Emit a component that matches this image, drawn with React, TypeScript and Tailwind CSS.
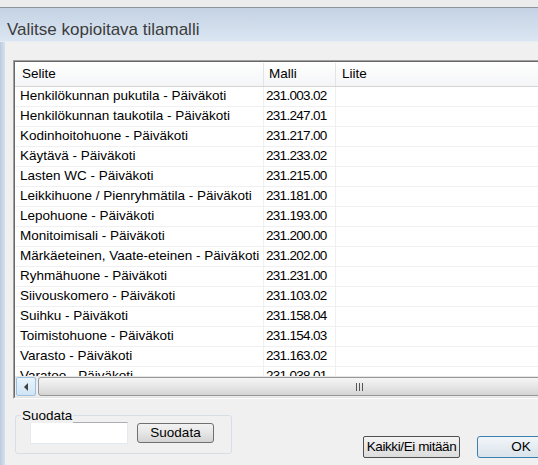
import React from "react";

const rows: [string, string][] = [
  ["Henkilökunnan pukutila - Päiväkoti", "231.003.02"],
  ["Henkilökunnan taukotila - Päiväkoti", "231.247.01"],
  ["Kodinhoitohuone - Päiväkoti", "231.217.00"],
  ["Käytävä - Päiväkoti", "231.233.02"],
  ["Lasten WC - Päiväkoti", "231.215.00"],
  ["Leikkihuone / Pienryhmätila - Päiväkoti", "231.181.00"],
  ["Lepohuone - Päiväkoti", "231.193.00"],
  ["Monitoimisali - Päiväkoti", "231.200.00"],
  ["Märkäeteinen, Vaate-eteinen - Päiväkoti", "231.202.00"],
  ["Ryhmähuone - Päiväkoti", "231.231.00"],
  ["Siivouskomero - Päiväkoti", "231.103.02"],
  ["Suihku - Päiväkoti", "231.158.04"],
  ["Toimistohuone - Päiväkoti", "231.154.03"],
  ["Varasto - Päiväkoti", "231.163.02"],
  ["Varatoo - Päiväkoti", "231.038.01"],
];

export default function App() {
  return (
    <div className="w-[538px] h-[465px] overflow-hidden bg-[#f0f0f0] flex flex-col font-['Liberation_Sans',Arial,sans-serif] text-[13.5px] text-black">
      <div className="h-[8px] shrink-0 bg-[#ececec] border-b border-[#8e949b]" />
      <div className="h-[34px] shrink-0 bg-gradient-to-b from-[#c4d2e4] to-[#dbe6f2] pl-[7px] pt-[12px] text-[17px] leading-[20px] text-[#3c3c3c] border-b border-[#e6edf5]">
        Valitse kopioitava tilamalli
      </div>
      <div className="flex flex-1 min-h-0">
        <div className="w-[5px] shrink-0 bg-gradient-to-r from-[#bccbdf] to-[#d6e1ee]" />
        <div className="flex-1 min-w-0 flex flex-col pl-[8px] pt-[18px]">
          {/* List view */}
          <div className="w-[580px] h-[339px] shrink-0 border border-t-[#a0a0a0] border-l-[#a0a0a0] border-b-white border-r-white">
            <div className="w-full h-full border border-t-[#696969] border-l-[#696969] border-b-[#e3e3e3] border-r-[#e3e3e3] bg-white flex flex-col">
              <div className="h-[25px] shrink-0 flex bg-gradient-to-b from-white to-[#f4f5f7] border-b border-[#d5d5d5] pt-[1px]">
                <div className="w-[249px] shrink-0 pl-[7px] flex items-center border-r border-[#e3e4e6]">Selite</div>
                <div className="w-[72px] shrink-0 pl-[5px] flex items-center border-r border-[#e3e4e6]">Malli</div>
                <div className="flex-1 pl-[6px] flex items-center">Liite</div>
              </div>
              <div className="flex-1 min-h-0 overflow-hidden">
                {rows.map(([name, code]) => (
                  <div key={code} className="h-[20px] flex border-b border-[#f0f0f0]">
                    <div className="w-[249px] shrink-0 pl-[5px] flex items-center border-r border-[#f0f0f0] whitespace-nowrap">{name}</div>
                    <div className="w-[72px] shrink-0 pl-[2px] flex items-center border-r border-[#f0f0f0] tracking-[-0.7px]">{code}</div>
                    <div className="flex-1" />
                  </div>
                ))}
              </div>
              {/* Horizontal scrollbar */}
              <div className="h-[21px] shrink-0 bg-gradient-to-b from-[#e6e6e6] via-[#f2f2f2] to-[#ececec] flex items-center pl-[1px]">
                <div className="w-[20px] h-[19px] shrink-0 rounded-[2px] border border-[#9ec0dc] bg-gradient-to-b from-[#eaf4fc] to-[#cfe4f5] flex items-center justify-center">
                  <svg width="5" height="8" viewBox="0 0 5 8"><path d="M4 0 L0 4 L4 8 Z" fill="#404040" /></svg>
                </div>
                <div className="ml-[2px] w-[642px] h-[19px] shrink-0 rounded-[3px] border border-[#979797] bg-gradient-to-b from-[#f5f5f5] via-[#e6e6e6] to-[#d4d4d4] flex items-center justify-center">
                  <div className="flex gap-[2px]">
                    <div className="w-[1px] h-[8px] bg-[#555]" />
                    <div className="w-[1px] h-[8px] bg-[#555]" />
                    <div className="w-[1px] h-[8px] bg-[#555]" />
                  </div>
                </div>
              </div>
            </div>
          </div>
          {/* Bottom area */}
          <div className="flex items-start">
            <div className="relative ml-[2px] mt-[16px] w-[217px] h-[39px] shrink-0 border border-[#d5dfe5] rounded-[3px] pl-[14px] pt-[6px]">
              <span className="absolute left-[5px] top-[-8px] px-[1px] bg-[#f0f0f0] leading-[15px]">Suodata</span>
              <div className="flex items-start">
                <div className="w-[98px] h-[22px] bg-white border border-[#e3e9ef] border-t-[#abadb3]" />
                <button className="ml-[9px] mt-[1px] w-[77px] h-[20px] rounded-[3px] border border-[#707070] bg-gradient-to-b from-[#f2f2f2] via-[#e6e6e6] to-[#d3d3d3] leading-[16px] flex items-center justify-center">
                  Suodata
                </button>
              </div>
            </div>
            <button className="ml-[131px] mt-[37px] w-[97px] h-[22px] shrink-0 rounded-[2px] border border-[#505050] bg-gradient-to-b from-[#f4f4f4] to-[#dcdcdc] tracking-[-0.4px] flex items-center justify-center">
              Kaikki/Ei mitään
            </button>
            <button className="ml-[17px] mt-[37px] w-[88px] h-[22px] shrink-0 rounded-[3px] border border-[#3c7fb1] bg-gradient-to-b from-[#f2f6f9] to-[#d9e3ea] flex items-center justify-center">
              OK
            </button>
          </div>
        </div>
      </div>
    </div>
  );
}
